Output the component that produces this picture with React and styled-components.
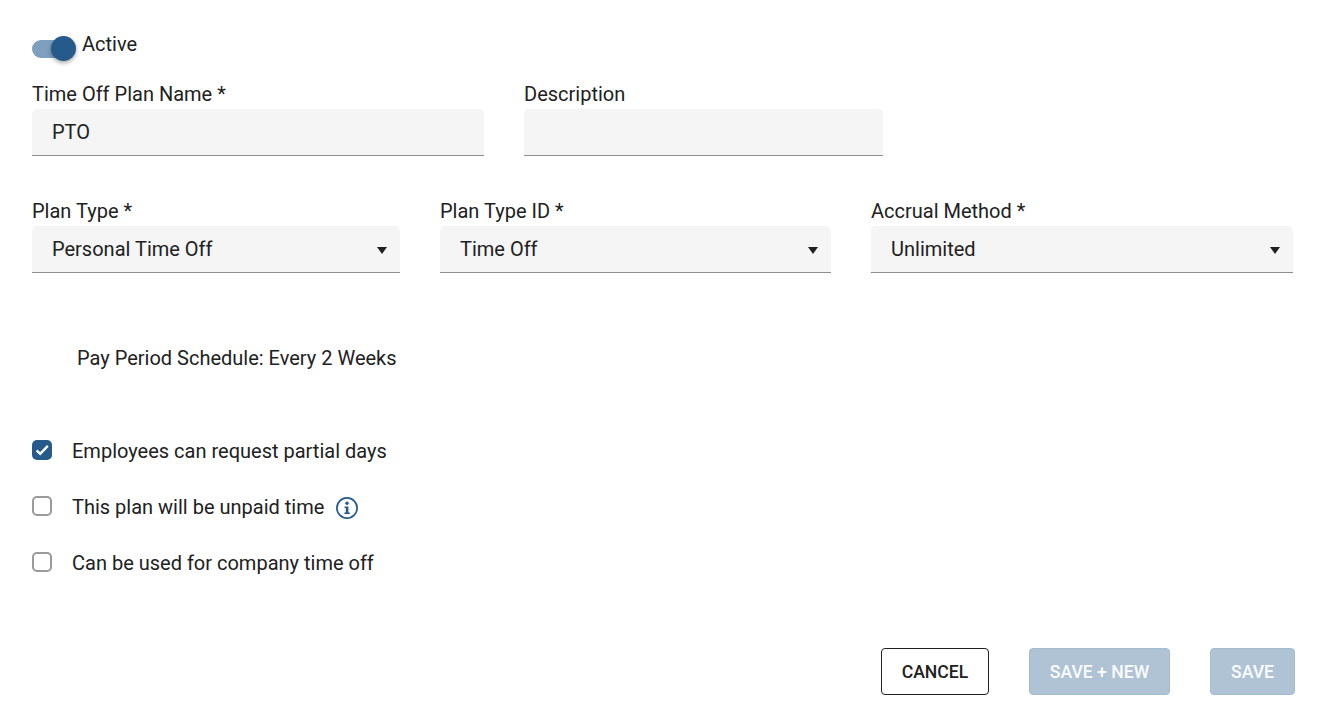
import styled, { createGlobalStyle } from "styled-components";

const Global = createGlobalStyle`
  html, body {
    margin: 0;
    padding: 0;
    background: #fff;
    color: #212121;
    font-family: Roboto, "Liberation Sans", sans-serif;
    font-size: 20px;
  }
`;

const Page = styled.div`
  width: 1326px;
  height: 722px;
  box-sizing: border-box;
  padding: 33px 31px 0 32px;
  display: flex;
  flex-direction: column;
  overflow: hidden;
`;

const ActiveRow = styled.div`
  display: flex;
  align-items: flex-start;
  gap: 12px;
  height: 34px;
`;

const SwitchTrack = styled.div`
  position: relative;
  width: 38px;
  height: 18px;
  margin-top: 7px;
  border-radius: 9px;
  background: #7f9fbe;
`;

const SwitchThumb = styled.div`
  position: absolute;
  top: -4px;
  right: -6px;
  width: 25px;
  height: 25px;
  border-radius: 50%;
  background: #255a8a;
  box-shadow: 0 2px 4px rgba(0, 0, 0, 0.35);
`;

const ActiveLabel = styled.span`
  line-height: 23px;
`;

const FieldRow = styled.div`
  display: flex;
  gap: 40px;
  margin-top: ${(p) => p.$top}px;
`;

const Field = styled.div`
  width: ${(p) => p.$width}px;
  display: flex;
  flex-direction: column;
`;

const Label = styled.label`
  height: 30px;
  line-height: 30px;
`;

const Control = styled.div`
  height: 47px;
  box-sizing: border-box;
  padding: 0 13px 0 20px;
  display: flex;
  align-items: center;
  justify-content: space-between;
  background: #f5f5f5;
  border-bottom: 1px solid #8e8e8e;
  border-radius: 5px 5px 0 0;
`;

const Caret = styled.svg`
  width: 10px;
  height: 7px;
  margin-top: 2px;
`;

const Schedule = styled.div`
  margin: 72px 0 0 45px;
  line-height: 26px;
`;

const Checks = styled.div`
  margin-top: 65px;
  display: flex;
  flex-direction: column;
  gap: 26px;
`;

const CheckRow = styled.div`
  height: 30px;
  display: flex;
  align-items: center;
`;

const Box = styled.div`
  width: 20px;
  height: 20px;
  box-sizing: border-box;
  margin-right: 20px;
  margin-top: -2px;
  border-radius: 5px;
  display: flex;
  align-items: center;
  justify-content: center;
  background: ${(p) => (p.$checked ? "#255a8a" : "#fff")};
  border: ${(p) => (p.$checked ? "none" : "2px solid #9a9a9a")};
`;

const InfoIcon = styled.svg`
  width: 24px;
  height: 24px;
  margin-left: 10.6px;
  margin-top: 1px;
`;

const Actions = styled.div`
  margin-top: 70px;
  display: flex;
  justify-content: flex-end;
  gap: 40px;
`;

const Button = styled.button`
  height: 47px;
  width: ${(p) => p.$width}px;
  box-sizing: border-box;
  padding: 0;
  border-radius: 4px;
  font-family: inherit;
  font-size: 17.6px;
  font-weight: 500;
  text-transform: uppercase;
  background: ${(p) => (p.$outline ? "#fff" : "#afc3d5")};
  color: ${(p) => (p.$outline ? "#212121" : "#fafcfd")};
  border: 1px solid ${(p) => (p.$outline ? "#212121" : "#a5bbcf")};
`;

const Check = ({ checked, children }) => (
  <CheckRow>
    <Box $checked={checked}>
      {checked && (
        <svg width="16" height="16" viewBox="0 0 16 16">
          <path d="M2.6 8.4 L6.2 11.8 L13.8 3.8" fill="none" stroke="#fff" strokeWidth="2.4" />
        </svg>
      )}
    </Box>
    {children}
  </CheckRow>
);

const Select = ({ label, value, width }) => (
  <Field $width={width}>
    <Label>{label}</Label>
    <Control>
      {value}
      <Caret viewBox="0 0 10 7">
        <path d="M0 0 H10 L5 7 Z" fill="#212121" />
      </Caret>
    </Control>
  </Field>
);

export default function App() {
  return (
    <Page>
      <Global />
      <ActiveRow>
        <SwitchTrack>
          <SwitchThumb />
        </SwitchTrack>
        <ActiveLabel>Active</ActiveLabel>
      </ActiveRow>

      <FieldRow $top={12}>
        <Field $width={452}>
          <Label>Time Off Plan Name *</Label>
          <Control>PTO</Control>
        </Field>
        <Field $width={359}>
          <Label>Description</Label>
          <Control />
        </Field>
      </FieldRow>

      <FieldRow $top={40}>
        <Select label="Plan Type *" value="Personal Time Off" width={368} />
        <Select label="Plan Type ID *" value="Time Off" width={391} />
        <Select label="Accrual Method *" value="Unlimited" width={422} />
      </FieldRow>

      <Schedule>Pay Period Schedule: Every 2 Weeks</Schedule>

      <Checks>
        <Check checked>Employees can request partial days</Check>
        <Check>
          This plan will be unpaid time
          <InfoIcon viewBox="0 0 24 24">
            <circle cx="12" cy="12" r="10.1" fill="none" stroke="#255a8a" strokeWidth="1.7" />
            <circle cx="12" cy="7.2" r="1.7" fill="#255a8a" />
            <path d="M9.5 10.4 H13.4 V16.4 H14.8 V18 H9.4 V16.4 H10.8 V12 H9.5 Z" fill="#255a8a" />
          </InfoIcon>
        </Check>
        <Check>Can be used for company time off</Check>
      </Checks>

      <Actions>
        <Button $outline $width={108}>Cancel</Button>
        <Button $width={141}>Save + New</Button>
        <Button $width={85}>Save</Button>
      </Actions>
    </Page>
  );
}
